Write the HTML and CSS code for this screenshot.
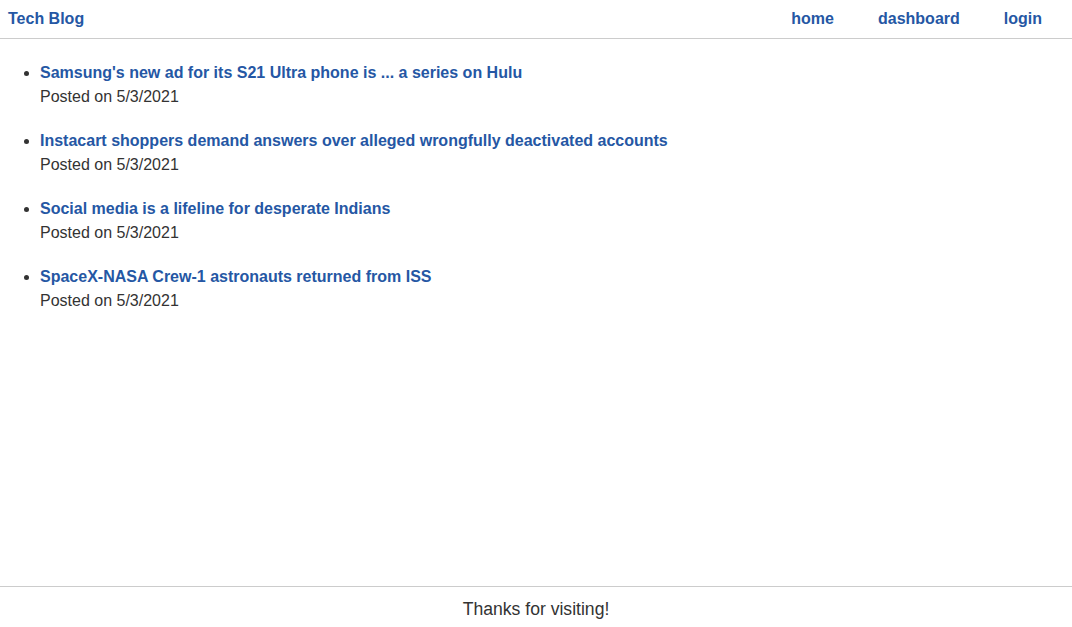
FILE: index.html
```html
<!DOCTYPE html>
<html lang="en">
<head>
<meta charset="utf-8">
<title>Tech Blog</title>
<link rel="stylesheet" href="styles.css">
</head>
<body>
<div class="page">
  <header class="site-header">
    <a class="brand" href="#">Tech Blog</a>
    <nav class="nav">
      <a href="#">home</a>
      <a href="#">dashboard</a>
      <a href="#">login</a>
    </nav>
  </header>
  <main class="content">
    <ul class="posts">
      <li><a href="#">Samsung's new ad for its S21 Ultra phone is ... a series on Hulu</a><p>Posted on 5/3/2021</p></li>
      <li><a href="#">Instacart shoppers demand answers over alleged wrongfully deactivated accounts</a><p>Posted on 5/3/2021</p></li>
      <li><a href="#">Social media is a lifeline for desperate Indians</a><p>Posted on 5/3/2021</p></li>
      <li><a href="#">SpaceX-NASA Crew-1 astronauts returned from ISS</a><p>Posted on 5/3/2021</p></li>
    </ul>
  </main>
  <footer class="site-footer">Thanks for visiting!</footer>
</div>
</body>
</html>
```

FILE: styles.css
```css
* { box-sizing: border-box; }
html, body { margin: 0; padding: 0; }
body {
  font-family: "Liberation Sans", Arial, sans-serif;
  font-size: 16px;
  line-height: 24px;
  color: #333;
  background: #fff;
}
a { color: #2557a4; font-weight: bold; text-decoration: none; }
.page { min-height: 100vh; display: flex; flex-direction: column; }
.site-header {
  display: flex;
  justify-content: space-between;
  align-items: center;
  padding: 7px 8px 7px 8px;
  border-bottom: 1px solid #ccc;
}
.nav { display: flex; }
.nav a { padding: 0 22px; }
.content { flex: 1; }
.posts { margin: 22px 0 0 0; padding-left: 40px; }
.posts li { margin-bottom: 20px; }
.posts a { display: block; }
.posts p { margin: 0; }
.site-footer {
  border-top: 1px solid #ccc;
  text-align: center;
  font-size: 17.6px;
  line-height: 24px;
  padding: 10px 0 6px;
}
```
